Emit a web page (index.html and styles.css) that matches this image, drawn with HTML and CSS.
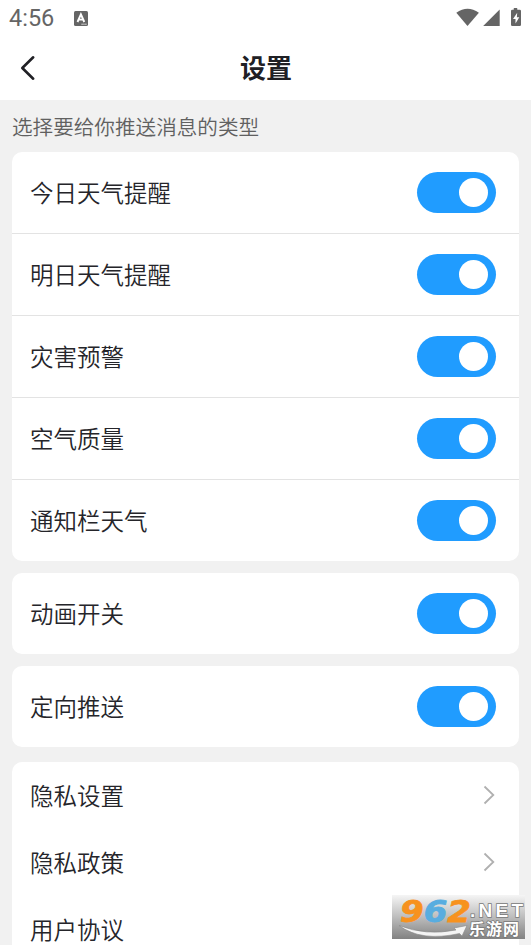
FILE: index.html
```html
<!DOCTYPE html>
<html lang="zh-CN">
<head>
<meta charset="utf-8">
<title>设置</title>
<link rel="stylesheet" href="styles.css">
</head>
<body>
<div class="screen">
  <div class="status">
    <span class="time">4:56</span>
    <svg class="input-icon" width="14" height="15" viewBox="0 0 14 15"><rect width="14" height="15" rx="1.5" fill="#656565"/><path d="M3.5 11 6.9 3.3 10.3 11M4.7 8.6h4.4" fill="none" stroke="#fff" stroke-width="1.9"/><path d="M7.5 13.2h5" stroke="#fff" stroke-width="1" stroke-dasharray="1.2 .7"/></svg>
    <svg class="signals" width="69" height="20" viewBox="0 0 69 20"><g fill="#656565"><path d="M.3 4.8Q11.5-3.3 22.9 4.8L11.500 18Z"/><path d="M43.700 1.500V18H27.200Z"/><path d="M57.700 1.800V.6Q57.700 0 58.300 0H60.700Q61.300 0 61.300.6V1.800H63.700Q65 1.800 65 3V16.800Q65 18 63.800 18H56.200Q55 18 55 16.800V3Q55 1.800 56.200 1.800Z"/></g><path d="M61.200 4.800 57 11h2.500v4.500L63.300 9.300h-2.400Z" fill="#fff"/></svg>
  </div>
  <header class="bar">
    <svg class="back" width="16" height="26" viewBox="0 0 16 26"><path d="M13.200 2.300 2.300 13 13.200 23.700" fill="none" stroke="#202025" stroke-width="2.600" stroke-linecap="round" stroke-linejoin="round"/></svg>
    <h1>设置</h1>
  </header>
  <main>
    <p class="caption">选择要给你推送消息的类型</p>
    <section class="card">
      <div class="row"><span>今日天气提醒</span><i class="switch"></i></div>
      <div class="row"><span>明日天气提醒</span><i class="switch"></i></div>
      <div class="row"><span>灾害预警</span><i class="switch"></i></div>
      <div class="row"><span>空气质量</span><i class="switch"></i></div>
      <div class="row"><span>通知栏天气</span><i class="switch"></i></div>
    </section>
    <section class="card"><div class="row"><span>动画开关</span><i class="switch"></i></div></section>
    <section class="card"><div class="row"><span>定向推送</span><i class="switch"></i></div></section>
    <section class="card links">
      <div class="link"><span>隐私设置</span><svg width="13" height="22" viewBox="0 0 13 22"><path d="M1.500 1.500 10.300 10 1.500 18.500"/></svg></div>
      <div class="link"><span>隐私政策</span><svg width="13" height="22" viewBox="0 0 13 22"><path d="M1.500 1.500 10.300 10 1.500 18.500"/></svg></div>
      <div class="link"><span>用户协议</span><svg width="13" height="22" viewBox="0 0 13 22"><path d="M1.500 1.500 10.300 10 1.500 18.500"/></svg></div>
    </section>
  </main>
  <svg class="watermark" width="133" height="44" viewBox="0 0 133 44">
    <defs>
      <linearGradient id="shade" x1="0" y1="0" x2="0" y2="1"><stop offset="0" stop-color="#f5f5f5"/><stop offset=".5" stop-color="#bdbdbd"/><stop offset="1" stop-color="#828282"/></linearGradient>
    </defs>
    <rect width="133" height="44" fill="url(#shade)"/>
    <path d="M7 30.500Q34 41 64 35L62 33 75 30.500 70 41 67.500 38.500Q29 47 7 30.500Z" fill="#f4f4f4" stroke="#888" stroke-width=".6"/>
    <text class="digits" x="8" y="26.500" textLength="71" lengthAdjust="spacingAndGlyphs"><tspan class="orange">9</tspan><tspan class="blue">6</tspan><tspan class="orange">2</tspan></text>
    <text class="net" x="78" y="22" textLength="53" lengthAdjust="spacing">.NET</text>
    <text class="site" x="77" y="40" textLength="50" lengthAdjust="spacing">乐游网</text>
  </svg>
</div>
</body>
</html>
```
FILE: styles.css
```css
* { box-sizing: border-box; }
body {
  margin: 0;
  background: #f1f1f1;
  color: #25252a;
  font-family: "Noto Sans CJK SC", sans-serif;
}
.screen { position: relative; height: 945px; overflow: hidden; }
.status {
  display: flex;
  align-items: center;
  height: 36px;
  padding: 0 6px 0 9px;
  background: #fff;
}
.time {
  width: 65px;
  font: 23.5px/36px Roboto, sans-serif;
  color: #656565;
}
.signals { margin-left: auto; }
.bar {
  display: flex;
  align-items: center;
  height: 64px;
  padding: 0 20px;
  background: #fff;
}
.back { display: block; }
.bar h1 {
  flex: 1;
  margin: 0 16px 0 0;
  padding: 0 0 2px 1px;
  text-align: center;
  font-size: 26px;
  line-height: 38px;
  font-weight: 700;
  color: #202025;
}
main { padding: 0 12px; }
.caption {
  margin: 0;
  height: 52px;
  font-size: 20.6px;
  line-height: 52px;
  font-weight: 350;
  color: #606060;
}
.card {
  margin-bottom: 12px;
  border-radius: 10px;
  background: #fff;
  font-size: 23.5px;
  font-weight: 350;
}
.card.links { margin-top: 15px; }
.row, .link {
  display: flex;
  align-items: center;
  justify-content: space-between;
  height: 81px;
  padding: 0 23px 0 18px;
}
.row span, .link span { padding-bottom: 2px; }
.row + .row { height: 82px; border-top: 1px solid #e3e3e3; }
.link { height: 67px; }
.switch {
  display: flex;
  justify-content: flex-end;
  width: 79px;
  height: 41px;
  padding: 6px 8px 0 0;
  border-radius: 21px;
  background: #209cff;
}
.switch::after {
  content: "";
  width: 29px;
  height: 29px;
  border-radius: 50%;
  background: #fff;
}
.link path { fill: none; stroke: #b0b0b0; stroke-width: 1.8; }
.watermark { position: absolute; left: 392px; top: 895px; }
.digits {
  font: italic 700 30px "DejaVu Sans", sans-serif;
  stroke-width: .8px;
}
.orange { fill: #f7921e; stroke: #f7921e; }
.blue { fill: #58ade0; stroke: #58ade0; }
.net, .site {
  fill: #fff;
  stroke: #777;
  stroke-width: 1.5px;
  paint-order: stroke;
}
.net { font: 700 19px "Liberation Sans", sans-serif; }
.site { font: 700 16px "Noto Sans CJK SC", sans-serif; }
```
